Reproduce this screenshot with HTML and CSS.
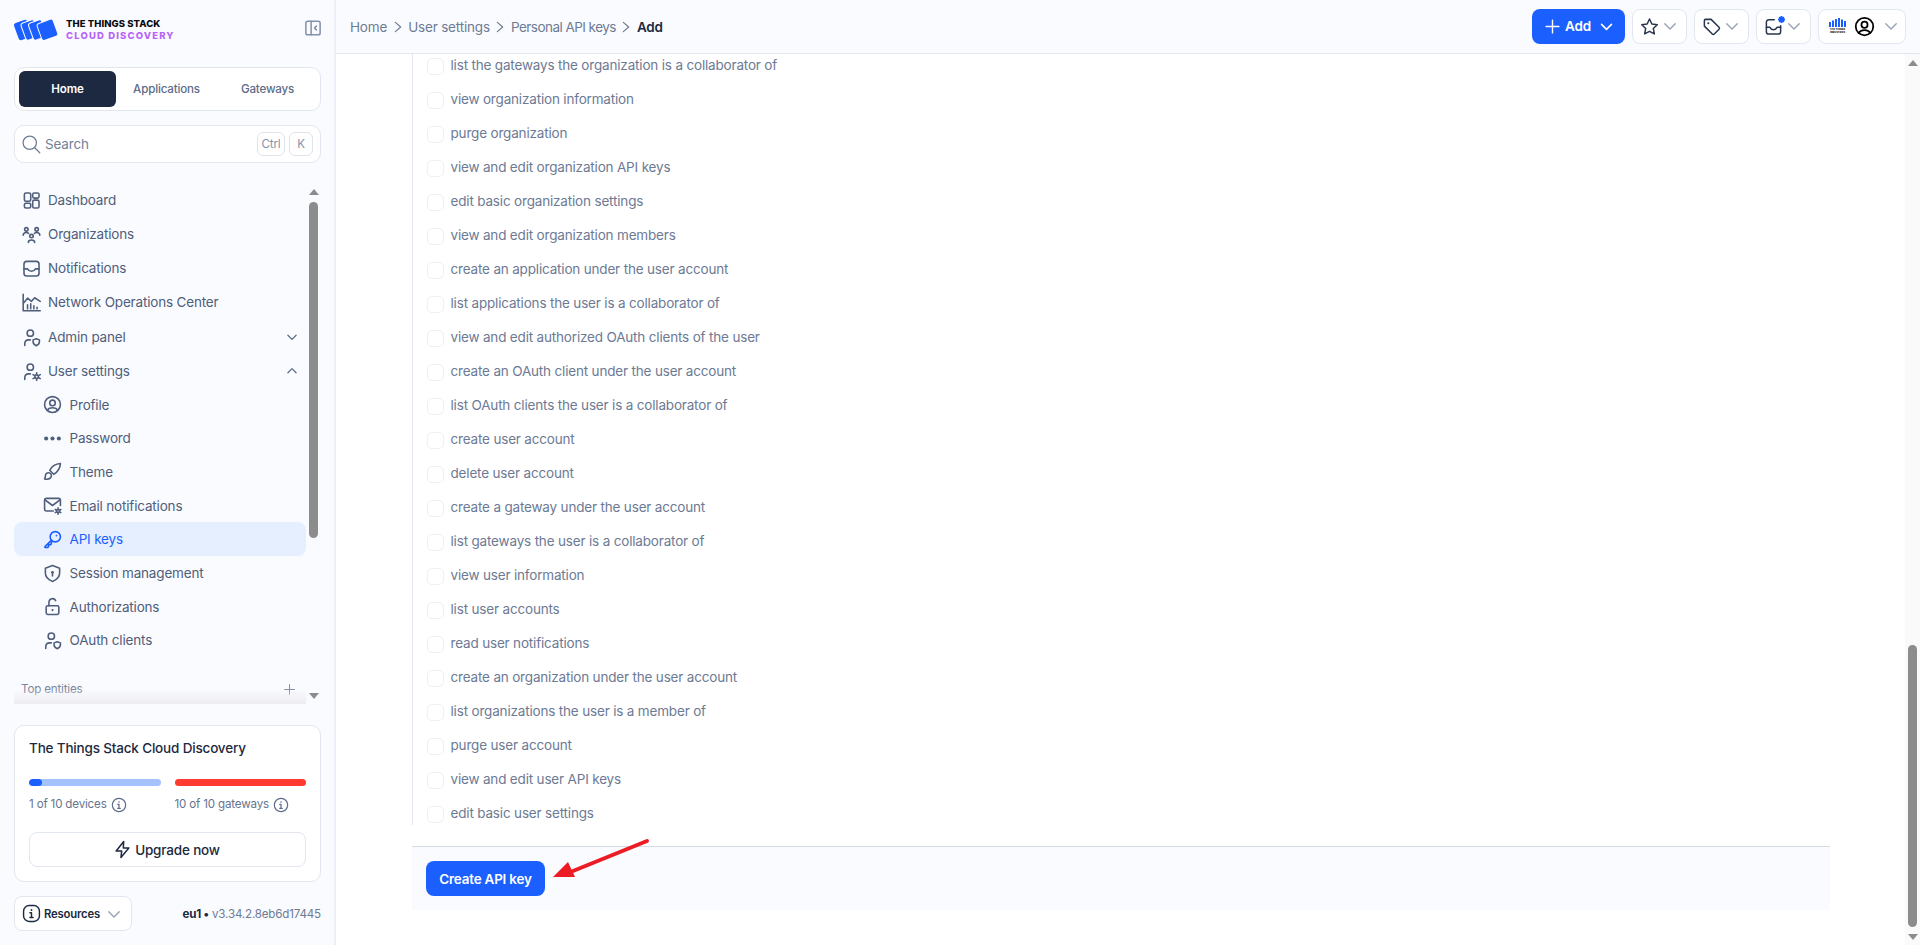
FILE: index.html
```html
<!DOCTYPE html>
<html lang="en">
<head>
<meta charset="utf-8">
<title>The Things Stack - Add API key</title>
<link rel="stylesheet" href="styles.css">
</head>
<body>
<svg class="sprite" width="0" height="0">
  <defs>
    <symbol id="i-dash" viewBox="0 0 24 24"><rect x="3" y="2.500" width="8" height="10.500" rx="2"/><rect x="13.500" y="2.500" width="8" height="6.500" rx="2"/><rect x="3" y="15.500" width="8" height="6" rx="2"/><rect x="13.500" y="11.500" width="8" height="10" rx="2"/></symbol>
    <symbol id="i-org" viewBox="0 0 24 24"><circle cx="12" cy="14" r="2.200"/><path d="M8 22c0-2 1.600-3 4-3s4 1 4 3"/><circle cx="5.500" cy="5.500" r="2.200"/><circle cx="18.500" cy="5.500" r="2.200"/><path d="M1.500 13c0-2 1.600-3.500 4-3.500 1.200 0 2.200.4 2.900 1.200M22.500 13c0-2-1.600-3.500-4-3.500-1.200 0-2.200.4-2.900 1.200"/></symbol>
    <symbol id="i-inbox" viewBox="0 0 24 24"><rect x="2.500" y="3" width="19" height="18.500" rx="3.500"/><path d="M2.500 12.500h4.500c1 2 2.700 3 5 3s4-1 5-3h4.500"/></symbol>
    <symbol id="i-mail" viewBox="0 0 24 24"><path d="M13 3.500H6a3 3 0 0 0-3 3v12a3 3 0 0 0 3 3h12a3 3 0 0 0 3-3V11"/><path d="M3 13h4.500c1 2 2.500 3 4.500 3s3.500-1 4.500-3H21"/></symbol>
    <symbol id="i-noc" viewBox="0 0 24 24"><path d="M1.500 1.500v21h21.500"/><path d="M2 12.500l5-6 5 4 4-4.500 7 4.500"/><path d="M7 20v-5M11 20v-6.500M15 20v-4M19 20v-2"/></symbol>
    <symbol id="i-admin" viewBox="0 0 24 24"><circle cx="10.500" cy="6.500" r="4"/><path d="M3.500 22v-2c0-3 2-5 5-5h2"/><path d="M18 13.500l4 1.500v2.500c0 2.500-1.700 4-4 5-2.300-1-4-2.500-4-5V15z"/></symbol>
    <symbol id="i-usergear" viewBox="0 0 24 24"><circle cx="10.500" cy="6.500" r="4"/><path d="M3.500 22v-2c0-3 2-5 5-5h2"/><circle cx="18.500" cy="18.500" r="2.200"/><path d="M18.500 13.500v2M18.500 21.500v2M14 16l2 1.200M21 19.800l2 1.200M14 21l2-1.200M21 17.200l2-1.200"/></symbol>
    <symbol id="i-profile" viewBox="0 0 24 24"><circle cx="12" cy="12" r="10"/><circle cx="12" cy="10" r="3.500"/><path d="M5.500 19.500c1-2.500 3.500-3.500 6.500-3.500s5.500 1 6.500 3.500"/></symbol>
    <symbol id="i-dots" viewBox="0 0 24 24"><circle class="solid" cx="4" cy="12" r="2.600"/><circle class="solid" cx="12" cy="12" r="2.600"/><circle class="solid" cx="20" cy="12" r="2.600"/></symbol>
    <symbol id="i-brush" viewBox="0 0 24 24"><path d="M22 2c-6 .5-11 4-13.500 8.500l5 5C18 13 21.500 8 22 2z"/><path d="M7.500 13.500c-3 0-4.500 2-4.500 4.500 0 1.500-.5 2.500-1 3.500 3 .5 7.500 0 8.500-3.500.5-2-1-4.500-3-4.500z"/></symbol>
    <symbol id="i-mailgear" viewBox="0 0 24 24"><path d="M13 19H4.500C3 19 2 18 2 16.500v-11C2 4 3 3 4.500 3h15C21 3 22 4 22 5.500V12"/><path d="M2.500 5l9.500 7 9.500-7"/><circle cx="19" cy="19" r="2"/><path d="M19 15v2M19 21v2M15.500 17l1.700 1M20.800 20l1.700 1M15.500 21l1.700-1M20.800 18l1.700-1"/></symbol>
    <symbol id="i-key" viewBox="0 0 24 24"><circle cx="15.500" cy="8.500" r="6.500"/><circle cx="17" cy="7" r="1.100" class="solid"/><path d="M10.500 13L2.500 21v1h3.500l1-1V18.500h2.500l1-1V15l1.500-.5"/></symbol>
    <symbol id="i-shield" viewBox="0 0 24 24"><path d="M12 2l9 3.500v6c0 5-3.500 8.500-9 10.500-5.500-2-9-5.500-9-10.500v-6z"/><circle class="solid" cx="12" cy="10.500" r="1.800"/><path d="M12 11v4"/></symbol>
    <symbol id="i-lock" viewBox="0 0 24 24"><rect x="4" y="11" width="16" height="11" rx="2"/><path d="M7.500 11V6.500a4.500 4.500 0 0 1 8.500-2"/><circle class="solid" cx="12" cy="16.500" r="1.400"/></symbol>
    <symbol id="i-chev" viewBox="0 0 24 24"><path d="M5 9l7 7 7-7"/></symbol>
    <symbol id="i-up" viewBox="0 0 24 24"><path d="M5 15l7-7 7 7"/></symbol>
    <symbol id="i-sep" viewBox="0 0 24 24"><path d="M8 5l8 7-8 7"/></symbol>
    <symbol id="i-plus" viewBox="0 0 24 24"><path d="M12 3v18M3 12h18"/></symbol>
    <symbol id="i-info" viewBox="0 0 24 24"><circle cx="12" cy="12" r="10"/><path d="M12 11v6M10 11h2M10 17h4"/><circle class="solid" cx="12" cy="7.500" r="1.200"/></symbol>
    <symbol id="i-resinfo" viewBox="0 0 24 24"><rect x="2" y="2" width="20" height="20" rx="7"/><path d="M12 11v6M10 11h2M10 17h4"/><circle class="solid" cx="12" cy="7.500" r="1.200"/></symbol>
    <symbol id="i-bolt" viewBox="0 0 24 24"><path d="M13.500 2L4 14h7l-1 8 10-12h-7z"/></symbol>
    <symbol id="i-star" viewBox="0 0 24 24"><path d="M12 2.500l3 6.300 6.800.9-5 4.800 1.300 6.900-6.100-3.300-6.100 3.300 1.300-6.900-5-4.800 6.800-.9z"/></symbol>
    <symbol id="i-tag" viewBox="0 0 24 24"><path d="M3 4.500C3 3.500 3.500 3 4.500 3h7l10 10c.7.700.7 1.800 0 2.500l-6 6c-.7.700-1.800.700-2.500 0L3 11.500z"/><circle class="solid" cx="8" cy="8" r="1.300"/></symbol>
    <symbol id="i-sideb" viewBox="0 0 24 24"><rect x="2.500" y="3" width="19" height="18" rx="2.500"/><path d="M9.500 3v18"/><path d="M16.500 9.500L14 12l2.500 2.500"/></symbol>
    <symbol id="i-search" viewBox="0 0 24 24"><circle cx="10.500" cy="10.500" r="8"/><path d="M16.500 16.500L22.500 22.500"/></symbol>
  </defs>
</svg>

<div class="app">
  <aside class="sidebar">
    <div class="brand">
      <svg class="brand-mark" viewBox="0 0 46 24"><g fill="#1c5fff"><rect x="2" y="3" width="14" height="18" rx="2.500" transform="rotate(-20 9 12)"/><rect x="9" y="3" width="14" height="18" rx="2.500" stroke="#fafbff" stroke-width="1" transform="rotate(-20 16 12)"/><rect x="16.500" y="3" width="14" height="18" rx="2.500" stroke="#fafbff" stroke-width="1" transform="rotate(-20 23.500 12)"/><rect x="25" y="3" width="17" height="18" rx="2.500" stroke="#fafbff" stroke-width="1" transform="rotate(-20 33 12)"/></g></svg>
      <div class="brand-text">
        <div class="brand-top">THE THINGS STACK</div>
        <div class="brand-sub">CLOUD DISCOVERY</div>
      </div>
      <svg class="ic-toggle"><use href="#i-sideb"/></svg>
    </div>

    <div class="tabs">
      <div class="tab tab-on">Home</div>
      <div class="tab">Applications</div>
      <div class="tab">Gateways</div>
    </div>

    <div class="search">
      <svg class="ic-search"><use href="#i-search"/></svg>
      <span class="search-label">Search</span>
      <span class="kbd kbd-ctrl">Ctrl</span>
      <span class="kbd kbd-k">K</span>
    </div>

    <div class="nav-wrap">
      <nav class="nav">
        <a class="item"><svg class="ic"><use href="#i-dash"/></svg>Dashboard</a>
        <a class="item"><svg class="ic"><use href="#i-org"/></svg>Organizations</a>
        <a class="item"><svg class="ic"><use href="#i-inbox"/></svg>Notifications</a>
        <a class="item"><svg class="ic"><use href="#i-noc"/></svg>Network Operations Center</a>
        <a class="item item-admin"><svg class="ic"><use href="#i-admin"/></svg>Admin panel<svg class="ic-caret"><use href="#i-chev"/></svg></a>
        <a class="item"><svg class="ic"><use href="#i-usergear"/></svg>User settings<svg class="ic-caret"><use href="#i-up"/></svg></a>
        <a class="sub"><svg class="ic"><use href="#i-profile"/></svg>Profile</a>
        <a class="sub"><svg class="ic"><use href="#i-dots"/></svg>Password</a>
        <a class="sub"><svg class="ic"><use href="#i-brush"/></svg>Theme</a>
        <a class="sub"><svg class="ic"><use href="#i-mailgear"/></svg>Email notifications</a>
        <a class="sub sub-on"><svg class="ic"><use href="#i-key"/></svg>API keys</a>
        <a class="sub"><svg class="ic"><use href="#i-shield"/></svg>Session management</a>
        <a class="sub"><svg class="ic"><use href="#i-lock"/></svg>Authorizations</a>
        <a class="sub"><svg class="ic"><use href="#i-admin"/></svg>OAuth clients</a>
        <div class="section"><span>Top entities</span><svg class="ic-plus"><use href="#i-plus"/></svg></div>
      </nav>
      <div class="bar bar-side">
        <span class="arrow arrow-up"></span>
        <span class="thumb thumb-side"></span>
        <span class="arrow arrow-down"></span>
      </div>
    </div>

    <section class="plan">
      <h2 class="plan-title">The Things Stack Cloud Discovery</h2>
      <div class="quota">
        <div class="quota-col">
          <div class="meter meter-blue"><div class="meter-fill" style="width:10%"></div></div>
          <div class="quota-label">1 of 10 devices<svg class="ic-info"><use href="#i-info"/></svg></div>
        </div>
        <div class="quota-col">
          <div class="meter meter-red"></div>
          <div class="quota-label">10 of 10 gateways<svg class="ic-info"><use href="#i-info"/></svg></div>
        </div>
      </div>
      <div class="upgrade"><svg class="ic-bolt"><use href="#i-bolt"/></svg>Upgrade now</div>
    </section>

    <div class="foot">
      <div class="resources"><svg class="ic-res"><use href="#i-resinfo"/></svg><span>Resources</span><svg class="ic-caret2"><use href="#i-chev"/></svg></div>
      <div class="version"><b>eu1 •</b> <span>v3.34.2.8eb6d17445</span></div>
    </div>
  </aside>

  <div class="column">
    <header class="topbar">
      <div class="crumbs">
        <span>Home</span><svg class="ic-sep"><use href="#i-sep"/></svg>
        <span>User settings</span><svg class="ic-sep"><use href="#i-sep"/></svg>
        <span class="crumb-long">Personal API keys</span><svg class="ic-sep"><use href="#i-sep"/></svg>
        <b>Add</b>
      </div>
      <div class="actions">
        <div class="btn-add"><svg class="ic-addplus"><use href="#i-plus"/></svg>Add<svg class="ic-addchev"><use href="#i-chev"/></svg></div>
        <div class="tool"><svg class="ic-tool"><use href="#i-star"/></svg><svg class="ic-caret2"><use href="#i-chev"/></svg></div>
        <div class="tool"><svg class="ic-tool"><use href="#i-tag"/></svg><svg class="ic-caret2"><use href="#i-chev"/></svg></div>
        <div class="tool"><span class="mail"><svg class="ic-tool"><use href="#i-mail"/></svg><i class="dot"></i></span><svg class="ic-caret2"><use href="#i-chev"/></svg></div>
        <div class="tool tool-user">
          <span class="org">
            <svg class="org-bars" viewBox="0 0 17 9"><g fill="#1c5fff"><rect x="0" y="4" width="2" height="5"/><rect x="3" y="2.500" width="2" height="6.500"/><rect x="6" y="1" width="2" height="8"/><rect x="9" y="0" width="2" height="9"/><rect x="12" y="1.500" width="2" height="7.500"/><rect x="15" y="3" width="2" height="6"/></g></svg>
            <span class="org-name">THE THINGS<br>INDUSTRIES</span>
          </span>
          <svg class="ic-avatar"><use href="#i-profile"/></svg>
          <svg class="ic-caret2"><use href="#i-chev"/></svg>
        </div>
      </div>
    </header>

    <div class="body">
      <main class="content">
        <ul class="rights">
          <li class="right"><span class="check"></span>list the gateways the organization is a collaborator of</li>
          <li class="right"><span class="check"></span>view organization information</li>
          <li class="right"><span class="check"></span>purge organization</li>
          <li class="right"><span class="check"></span>view and edit organization API keys</li>
          <li class="right"><span class="check"></span>edit basic organization settings</li>
          <li class="right"><span class="check"></span>view and edit organization members</li>
          <li class="right"><span class="check"></span>create an application under the user account</li>
          <li class="right"><span class="check"></span>list applications the user is a collaborator of</li>
          <li class="right"><span class="check"></span>view and edit authorized OAuth clients of the user</li>
          <li class="right"><span class="check"></span>create an OAuth client under the user account</li>
          <li class="right"><span class="check"></span>list OAuth clients the user is a collaborator of</li>
          <li class="right"><span class="check"></span>create user account</li>
          <li class="right"><span class="check"></span>delete user account</li>
          <li class="right"><span class="check"></span>create a gateway under the user account</li>
          <li class="right"><span class="check"></span>list gateways the user is a collaborator of</li>
          <li class="right"><span class="check"></span>view user information</li>
          <li class="right"><span class="check"></span>list user accounts</li>
          <li class="right"><span class="check"></span>read user notifications</li>
          <li class="right"><span class="check"></span>create an organization under the user account</li>
          <li class="right"><span class="check"></span>list organizations the user is a member of</li>
          <li class="right"><span class="check"></span>purge user account</li>
          <li class="right"><span class="check"></span>view and edit user API keys</li>
          <li class="right"><span class="check"></span>edit basic user settings</li>
        </ul>
        <div class="submit">
          <button class="btn-create" type="button">Create API key</button>
          <svg class="callout" viewBox="0 0 100 44" width="100" height="44"><path d="M94 3L20 33" stroke="#ed1c24" stroke-width="4" stroke-linecap="round" fill="none"/><path d="M0 39L15 24l7 15z" fill="#ed1c24"/></svg>
        </div>
      </main>
      <div class="bar bar-main">
        <span class="arrow arrow-up"></span>
        <span class="thumb thumb-main"></span>
        <span class="arrow arrow-down"></span>
      </div>
    </div>
  </div>
</div>
</body>
</html>
```
FILE: styles.css
```css
* { box-sizing: border-box; }
html, body { margin: 0; height: 100%; overflow: hidden; }
body { font-family: Inter, "Noto Sans", sans-serif; font-size: 13.5px; letter-spacing: -.013em; color: #1c2940; background: #fff; }
.sprite { position: absolute; }
svg { fill: none; stroke: currentColor; stroke-width: 2; stroke-linecap: round; stroke-linejoin: round; flex: none; }
symbol .solid { fill: currentColor; stroke: none; }
.app { display: flex; height: 945px; }

/* sidebar */
.sidebar { width: 336px; flex: none; background: #fafbff; border-right: 2px solid #eceff5; padding: 0 13px 0 14px; display: flex; flex-direction: column; }
.brand { height: 67px; display: flex; align-items: flex-start; padding-top: 19px; }
.brand-mark { width: 46px; height: 24px; stroke: none; margin-right: 6px; margin-top: -1px; }
.brand-text { font-weight: 800; font-size: 9.5px; line-height: 12px; margin-top: -1px; }
.brand-top { color: #0b0b12; letter-spacing: .008em; }
.brand-sub { color: #b765f5; letter-spacing: .12em; }
.ic-toggle { width: 18px; height: 18px; color: #8290a8; margin-left: auto; margin-right: -1px; stroke-width: 2; }
.tabs { height: 44px; border: 1px solid #e2e6ef; border-radius: 10px; background: #fff; padding: 3px 2px 3px 4px; display: flex; }
.tab { flex: 1; display: flex; align-items: center; justify-content: center; font-size: 11.6px; font-weight: 500; color: #5d6c88; border-radius: 6px; height: 36px; }
.tab-on { background: #1c2940; color: #fff; font-weight: 600; flex: none; width: 97px; }
.search { margin-top: 14px; height: 38px; border: 1px solid #e2e6ef; border-radius: 10px; background: #fff; display: flex; align-items: center; padding: 0 7px 0 6px; gap: 4px; }
.ic-search { width: 20px; height: 20px; color: #6d7c96; stroke-width: 1.5; }
.search-label { color: #748199; flex: 1; }
.kbd { height: 24px; border: 1px solid #dfe3ec; border-radius: 6px; font-size: 11.6px; color: #8391a8; display: flex; align-items: center; justify-content: center; }
.kbd-ctrl { width: 28px; }
.kbd-k { width: 24px; }
.nav-wrap { margin-top: 20px; height: 521px; display: flex; }
.nav { width: 292px; flex: none; position: relative; }
.nav a { display: flex; align-items: center; color: #4f5e7b; }
.item { height: 34px; padding-left: 7.500px; gap: 7.500px; }
.item-admin { margin-top: 1px; }
.sub { height: 33.6px; padding-left: 28.500px; gap: 8px; border-radius: 8px; }
.ic { width: 19px; height: 19px; color: #4f5e7b; stroke-width: 2; }
.nav .sub-on { background: #e6efff; color: #1c5fff; height: 34px; }
.sub-on .ic { color: #1c5fff; }
.ic-caret { width: 14px; height: 14px; margin-left: auto; margin-right: 7px; color: #5d6c88; stroke-width: 2.2; }
.section { margin-top: 16px; height: 32px; display: flex; align-items: center; justify-content: space-between; padding: 0 10px 0 7px; color: #7a879d; font-size: 11.6px; }
.ic-plus { width: 13px; height: 13px; color: #7d8aa0; stroke-width: 1.8; }
.nav::after { content: ""; position: absolute; left: 0; right: 0; bottom: 0; height: 15px; background: linear-gradient(to bottom, rgba(236,236,240,0), #ededf0); pointer-events: none; }

/* scrollbars */
.bar { display: flex; flex-direction: column; align-items: center; }
.bar-side { width: 9px; margin-left: 3px; }
.arrow { width: 0; height: 0; border-left: 5px solid transparent; border-right: 5px solid transparent; }
.arrow-up { border-bottom: 6px solid #8c8c8c; }
.arrow-down { border-top: 6px solid #8c8c8c; }
.thumb { width: 9px; background: #8c8c8c; border-radius: 5px; }
.bar-side .arrow-up { margin-top: 6px; }
.thumb-side { height: 336px; margin-top: 7px; }
.bar-side .arrow-down { margin-top: 155px; }
.bar-main { width: 15px; flex: none; background: #fafafa; }
.bar-main .arrow-up { margin-top: 6px; }
.thumb-main { height: 282px; margin-top: 579px; }
.bar-main .arrow-down { margin-top: 7px; }

/* plan */
.plan { margin-top: 21px; height: 157px; border: 1px solid #e2e6ef; border-radius: 10px; background: #fff; padding: 14px 14px 0; }
.plan-title { margin: 0; font-size: 13.5px; font-weight: 500; line-height: 17px; color: #1c2940; }
.quota { display: flex; gap: 14px; margin-top: 22px; }
.quota-col { width: 131.500px; }
.meter { height: 7px; border-radius: 4px; overflow: hidden; }
.meter-blue { background: #a4c2ff; }
.meter-fill { height: 100%; background: #1c5fff; border-radius: 4px; }
.meter-red { background: #ff3a30; }
.quota-label { margin-top: 11px; display: flex; align-items: center; gap: 4px; font-size: 11.6px; line-height: 15px; color: #66748e; white-space: nowrap; }
.ic-info { width: 16px; height: 16px; margin-top: -1px; margin-bottom: -1px; color: #5d6c88; stroke-width: 1.8; }
.upgrade { margin-top: 20px; height: 35px; border: 1px solid #e2e6ef; border-radius: 8px; display: flex; align-items: center; justify-content: center; gap: 3px; padding-right: 2px; font-weight: 500; color: #1c2940; }
.ic-bolt { width: 19px; height: 19px; stroke-width: 1.9; }
.foot { margin-top: 14px; display: flex; align-items: center; justify-content: space-between; }
.resources { width: 118px; height: 35px; border: 1px solid #e2e6ef; border-radius: 8px; background: #fff; display: flex; align-items: center; padding: 0 8px 0 7px; gap: 3px; font-size: 11.3px; font-weight: 600; color: #1c2940; }
.ic-res { width: 19px; height: 19px; color: #1c2940; stroke-width: 1.8; }
.ic-caret2 { width: 18px; height: 18px; color: #94a0b4; stroke-width: 1.8; margin-left: auto; }
.version { font-size: 11.6px; color: #6d7a92; }
.version b { color: #1c2940; font-weight: 700; }

/* top bar */
.column { flex: 1; min-width: 0; display: flex; flex-direction: column; }
.topbar { height: 54px; flex: none; background: #fafbff; border-bottom: 1px solid #e2e6ef; padding: 0 14px; display: flex; align-items: center; justify-content: space-between; }
.crumbs { display: flex; align-items: center; gap: 2.500px; color: #6d7c94; }
.crumb-long { letter-spacing: -.04em; }
.crumbs b { color: #1c2940; font-weight: 600; }
.ic-sep { width: 16px; height: 16px; color: #6d7c94; stroke-width: 1.8; }
.actions { display: flex; gap: 7px; margin-top: -1px; }
.btn-add { width: 93px; height: 35px; border-radius: 8px; background: #1c5fff; color: #fff; font-weight: 600; display: flex; align-items: center; padding: 0 10px 0 12px; gap: 4px; }
.ic-addplus { width: 17px; height: 17px; stroke-width: 2; }
.ic-addchev { width: 17px; height: 17px; margin-left: auto; stroke-width: 2.2; }
.tool { width: 55px; height: 35px; border: 1px solid #e2e6ef; border-radius: 8px; background: #fff; display: flex; align-items: center; padding: 0 7px; }
.ic-tool { width: 19px; height: 19px; color: #2a3650; stroke-width: 1.9; display: block; }
.mail { position: relative; display: block; }
.dot { position: absolute; top: -1px; right: -1.500px; width: 7px; height: 7px; border-radius: 50%; background: #1c5fff; outline: 1px solid #fff; }
.tool-user { width: 88px; padding: 0 7px 0 10px; gap: 7.500px; }
.org { width: 17px; display: flex; flex-direction: column; align-items: center; }
.org-bars { width: 17px; height: 9px; stroke: none; }
.org-name { font-size: 2.500px; line-height: 3px; font-weight: 800; letter-spacing: 0; text-align: center; color: #111; white-space: nowrap; margin-top: 1px; }
.ic-avatar { width: 21px; height: 21px; color: #000; stroke-width: 2; }

/* main */
.body { flex: 1; min-height: 0; display: flex; }
.content { flex: 1; min-width: 0; padding: 0 75px 0 76px; }
.rights { margin: 0; padding: 4px 0 2px 14px; list-style: none; border-left: 1px solid #e2e6ef; display: flex; flex-direction: column; gap: 17px; }
.right { height: 17px; display: flex; gap: 6.500px; color: #6d7a94; line-height: 14px; white-space: nowrap; }
.check { width: 17px; height: 17px; border: 1px solid #eef0f4; border-radius: 5px; background: #fff; flex: none; }
.submit { position: relative; margin-top: 21px; height: 64px; border-top: 1px solid #d5dae5; background: #fafbfe; padding: 14px; }
.btn-create { width: 119px; height: 35px; border: 0; border-radius: 8px; background: #1c5fff; color: #fff; font: 600 13.4px Inter, sans-serif; letter-spacing: -.013em; padding: 0; }
.callout { position: absolute; left: 141px; top: -9px; stroke: none; }
```
